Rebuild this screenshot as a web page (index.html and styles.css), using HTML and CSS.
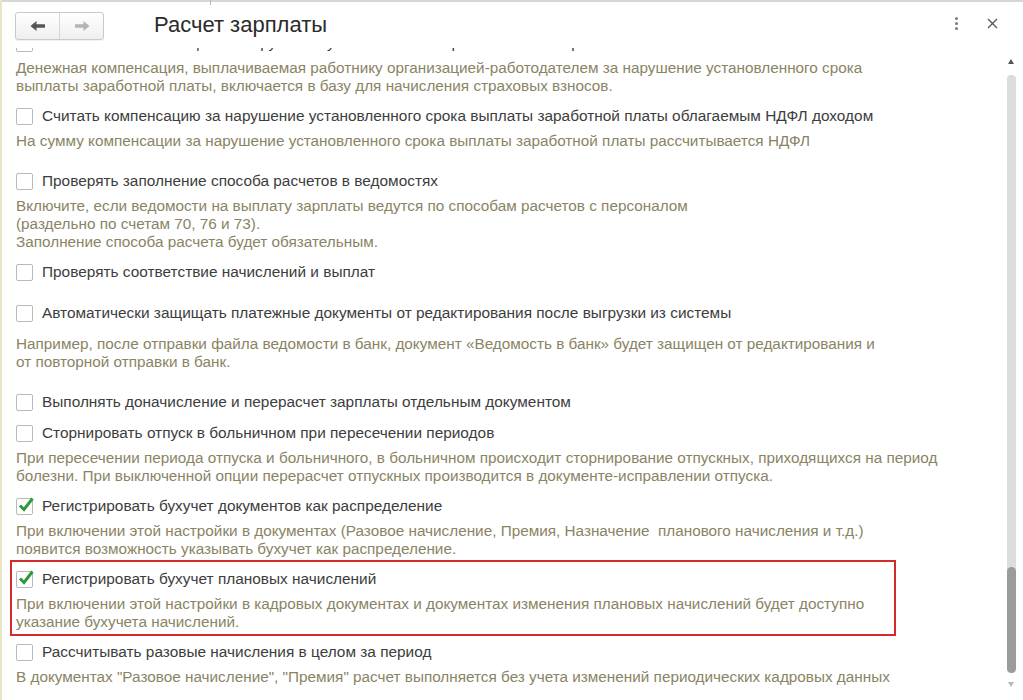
FILE: index.html
```html
<!DOCTYPE html>
<html lang="ru">
<head>
<meta charset="utf-8">
<title>Расчет зарплаты</title>
<link rel="stylesheet" href="styles.css">
</head>
<body>
<div class="window">
  <div class="topline"><span class="tick"></span></div>
  <header class="head">
    <div class="nav">
      <button class="navbtn back" type="button" aria-label="Назад">
        <svg width="16" height="12" viewBox="0 0 16 12"><path d="M0.5 6 L6.5 1 L6.5 4.3 L15 4.3 L15 7.7 L6.5 7.7 L6.5 11 Z" fill="#555"/></svg>
      </button>
      <button class="navbtn fwd" type="button" aria-label="Вперед">
        <svg width="16" height="12" viewBox="0 0 16 12"><path d="M15.5 6 L9.5 1 L9.5 4.3 L1 4.3 L1 7.7 L9.5 7.7 L9.5 11 Z" fill="#b4b4b4"/></svg>
      </button>
    </div>
    <h1 class="title">Расчет зарплаты</h1>
    <div class="tools">
      <span class="kebab"><i></i><i></i><i></i></span>
      <svg class="close" width="11" height="11" viewBox="0 0 11 11"><path d="M1 1 L10 10 M10 1 L1 10" stroke="#555" stroke-width="1.3"/></svg>
    </div>
  </header>
  <div class="body">
    <div class="viewport">
      <div class="list">
        <div class="opt">
          <label class="row"><span class="cb"></span><span class="lbl">Начислять компенсацию за нарушение установленного срока выплаты заработной платы</span></label>
          <p class="desc">Денежная компенсация, выплачиваемая работнику организацией-работодателем за нарушение установленного срока<br>выплаты заработной платы, включается в базу для начисления страховых взносов.</p>
        </div>
        <div class="opt sp">
          <label class="row"><span class="cb"></span><span class="lbl">Считать компенсацию за нарушение установленного срока выплаты заработной платы облагаемым НДФЛ доходом</span></label>
          <p class="desc">На сумму компенсации за нарушение установленного срока выплаты заработной платы рассчитывается НДФЛ</p>
        </div>
        <div class="opt">
          <label class="row"><span class="cb"></span><span class="lbl">Проверять заполнение способа расчетов в ведомостях</span></label>
          <p class="desc">Включите, если ведомости на выплату зарплаты ведутся по способам расчетов с персоналом<br>(раздельно по счетам 70, 76 и 73).<br>Заполнение способа расчета будет обязательным.</p>
        </div>
        <div class="opt sp2">
          <label class="row"><span class="cb"></span><span class="lbl">Проверять соответствие начислений и выплат</span></label>
        </div>
        <div class="opt sp">
          <label class="row"><span class="cb"></span><span class="lbl">Автоматически защищать платежные документы от редактирования после выгрузки из системы</span></label>
          <p class="desc far">Например, после отправки файла ведомости в банк, документ «Ведомость в банк» будет защищен от редактирования и<br>от повторной отправки в банк.</p>
        </div>
        <div class="opt tight">
          <label class="row"><span class="cb"></span><span class="lbl">Выполнять доначисление и перерасчет зарплаты отдельным документом</span></label>
        </div>
        <div class="opt">
          <label class="row"><span class="cb"></span><span class="lbl">Сторнировать отпуск в больничном при пересечении периодов</span></label>
          <p class="desc">При пересечении периода отпуска и больничного, в больничном происходит сторнирование отпускных, приходящихся на период<br>болезни. При выключенной опции перерасчет отпускных производится в документе-исправлении отпуска.</p>
        </div>
        <div class="opt pre">
          <label class="row"><span class="cb on"><svg viewBox="0 0 18 18" width="18" height="18"><path d="M3 9.5 L7 13.5 L15.5 2.5" fill="none" stroke="#2f9a3c" stroke-width="3"/></svg></span><span class="lbl">Регистрировать бухучет документов как распределение</span></label>
          <p class="desc">При включении этой настройки в документах (Разовое начисление, Премия, Назначение &nbsp;планового начисления и т.д.)<br>появится возможность указывать бухучет как распределение.</p>
        </div>
        <div class="opt boxed">
          <label class="row"><span class="cb on"><svg viewBox="0 0 18 18" width="18" height="18"><path d="M3 9.5 L7 13.5 L15.5 2.5" fill="none" stroke="#2f9a3c" stroke-width="3"/></svg></span><span class="lbl">Регистрировать бухучет плановых начислений</span></label>
          <p class="desc">При включении этой настройки в кадровых документах и документах изменения плановых начислений будет доступно<br>указание бухучета начислений.</p>
        </div>
        <div class="opt">
          <label class="row"><span class="cb"></span><span class="lbl">Рассчитывать разовые начисления в целом за период</span></label>
          <p class="desc">В документах "Разовое начисление", "Премия" расчет выполняется без учета изменений периодических кадровых данных</p>
        </div>
      </div>
    </div>
    <div class="scrollbar">
      <span class="arr up"></span>
      <div class="track"><div class="thumb"></div></div>
      <span class="arr down"></span>
    </div>
  </div>
</div>
</body>
</html>
```
FILE: styles.css
```css
* { box-sizing: border-box; }
html, body { margin: 0; padding: 0; background: #fff; }
body {
  font-family: "Liberation Sans", Arial, sans-serif;
  width: 1023px;
  height: 700px;
  overflow: hidden;
}
.window {
  width: 1023px;
  height: 700px;
  display: flex;
  flex-direction: column;
  border-left: 2px solid #e9e6c6;
}
.topline {
  height: 3px;
  border-top: 2px solid #d6d6d6;
  position: relative;
  flex-shrink: 0;
}
.tick {
  position: absolute;
  left: 208px;
  top: -2px;
  width: 1px;
  height: 5px;
  background: #b8b8b8;
}
.head {
  height: 45px;
  display: flex;
  align-items: flex-start;
  flex-shrink: 0;
}
.nav {
  display: flex;
  margin: 9px 0 0 13px;
  height: 28px;
  border: 1px solid #c9c9c9;
  border-radius: 3px;
  background: linear-gradient(#ffffff, #efefef);
  box-shadow: 0 1px 1px rgba(0,0,0,0.06);
}
.navbtn {
  width: 43px;
  height: 26px;
  border: 0;
  background: transparent;
  padding: 0;
  display: flex;
  align-items: center;
  justify-content: center;
}
.navbtn.back { border-right: 1px solid #d6d6d6; width: 44px; }
.title {
  margin: 8px 0 0 50px;
  font-size: 22px;
  font-weight: normal;
  color: #2b2b2b;
  line-height: 28px;
  flex: 1;
}
.tools {
  display: flex;
  align-items: center;
  margin-top: 14px;
  margin-right: 25px;
}
.kebab {
  display: flex;
  flex-direction: column;
  gap: 2px;
  margin-right: 29px;
}
.kebab i {
  display: block;
  width: 3px;
  height: 3px;
  border-radius: 50%;
  background: #7a7a7a;
}
.close { display: block; }
.body {
  flex: 1;
  display: flex;
  min-height: 0;
}
.viewport {
  flex: 1;
  overflow: hidden;
  padding-left: 14px;
}
.list {
  margin-top: -17px;
  display: flex;
  flex-direction: column;
}
.opt { margin-bottom: 9px; }
.opt.sp { margin-bottom: 19px; }
.opt.sp2 { margin-bottom: 17px; }
.opt.tight { margin-bottom: 7px; }
.opt.pre { margin-bottom: 2px; }
.row {
  display: flex;
  align-items: center;
  height: 24px;
}
.cb {
  width: 17px;
  height: 17px;
  border: 1px solid #b9b9b9;
  border-radius: 2px;
  background: #fff;
  margin-right: 9px;
  flex-shrink: 0;
  position: relative;
}
.cb svg {
  position: absolute;
  left: 0;
  top: -3px;
}
.lbl {
  font-size: 15.4px;
  color: #3d3d3d;
  white-space: nowrap;
}
.desc {
  margin: 4px 0 0;
  font-size: 15.3px;
  line-height: 18px;
  color: #8a8464;
  white-space: nowrap;
}
.desc.far { margin-top: 10px; }
.boxed {
  margin-left: -6px;
  width: 886px;
  border: 2px solid #d42a2a;
  padding: 5px 0 3px 4px;
  margin-bottom: 4px;
}
.scrollbar {
  width: 20px;
  display: flex;
  flex-direction: column;
  align-items: center;
  margin-right: 2px;
  padding-top: 11px;
}
.arr {
  width: 0;
  height: 0;
  border-left: 3.5px solid transparent;
  border-right: 3.5px solid transparent;
}
.arr.up { border-bottom: 5px solid #555; }
.arr.down { border-top: 5px solid #b8b8b8; margin-top: 9px; }
.track {
  margin-top: 11px;
  width: 9px;
  height: 598px;
  background: #dcdcdc;
  border-radius: 4px;
  display: flex;
  flex-direction: column;
  justify-content: flex-end;
}
.thumb {
  height: 106px;
  background: #9b9b9b;
  border-radius: 5px;
}
```
